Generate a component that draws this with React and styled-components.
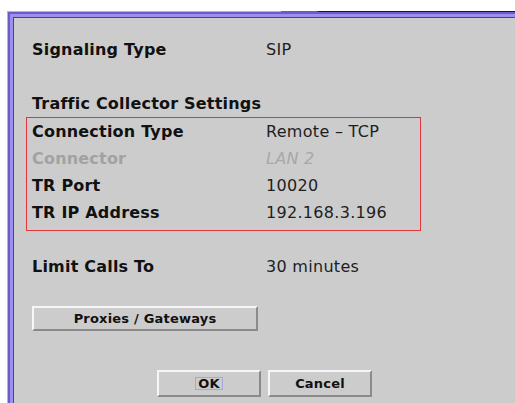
import React from "react";
import styled, { createGlobalStyle } from "styled-components";

const GlobalStyle = createGlobalStyle`
  html, body {
    margin: 0;
    height: 100%;
    overflow: hidden;
    background: #ffffff;
  }
  #root {
    height: 100%;
  }
`;

const Window = styled.div`
  margin: 11px 0 0 7px;
  height: calc(100% - 11px);
  display: flex;
  border-left: 1px solid #b4b4b4;
  border-top: 1px solid transparent;
  border-image: linear-gradient(to right, #b8b8b8 0, #b8b8b8 273px, #6a6a6a 274px, #6a6a6a 308px, #1a1a1a 312px) 1;
  border-right: 0;
  border-bottom: 0;
`;

const OuterBevel = styled.div`
  flex: 1;
  display: flex;
  border-top: 2px solid #6b5dc6;
  border-left: 2px solid #6b5dc6;
`;

const InnerBevel = styled.div`
  flex: 1;
  display: flex;
  border-top: 3px solid #9c8ff0;
  border-left: 3px solid #9c8ff0;
`;

const Panel = styled.div`
  flex: 1;
  display: flex;
  flex-direction: column;
  align-items: flex-start;
  background: #cccccc;
  border-top: 1px solid #4c4a62;
  border-left: 1px solid #4c4a62;
  padding: 18px 0 0 18px;
  font-family: "DejaVu Sans", "Liberation Sans", sans-serif;
`;

const Row = styled.div`
  display: grid;
  grid-template-columns: 234px 1fr;
  height: 27px;
  line-height: 27px;
  font-size: 16px;
  white-space: nowrap;
`;

const Label = styled.span`
  font-weight: bold;
  letter-spacing: 0.2px;
  color: ${(p) => (p.$disabled ? "#a2a2a2" : "#111111")};
`;

const Value = styled.span`
  color: ${(p) => (p.$disabled ? "#a8a8a8" : "#1e1e1e")};
  font-style: ${(p) => (p.$disabled ? "italic" : "normal")};
  letter-spacing: 0.3px;
`;

const Heading = styled.div`
  margin-top: 27px;
  height: 27px;
  line-height: 27px;
  font-size: 16px;
  font-weight: bold;
  letter-spacing: 0.2px;
  color: #111111;
`;

const Highlight = styled.div`
  margin-left: -6px;
  width: 395px;
  box-sizing: border-box;
  border: 1px solid #e2363a;
  padding: 0 0 4px 5px;
`;

const Spaced = styled.div`
  margin-top: ${(p) => p.$top}px;
`;

const Button = styled.button`
  box-sizing: border-box;
  width: ${(p) => p.$width}px;
  height: ${(p) => p.$height}px;
  margin: 0;
  padding: 0;
  background: #cccccc;
  border-style: solid;
  border-width: 2px;
  border-color: #f6f6f6 #8a8a8a #8a8a8a #f6f6f6;
  font-family: "DejaVu Sans", "Liberation Sans", sans-serif;
  font-size: 13px;
  font-weight: bold;
  color: #111111;
  letter-spacing: 0.2px;
  display: flex;
  align-items: center;
  justify-content: center;
`;

const FocusRing = styled.span`
  border: 1px solid #a9a6de;
  padding: 0 2px;
  line-height: 11px;
  height: 11px;
`;

const ButtonBar = styled.div`
  align-self: stretch;
  margin: 39px 0 0 -18px;
  display: flex;
  justify-content: center;
  gap: 7px;
`;

const settings = [
  { label: "Connection Type", value: "Remote – TCP" },
  { label: "Connector", value: "LAN 2", disabled: true },
  { label: "TR Port", value: "10020" },
  { label: "TR IP Address", value: "192.168.3.196" },
];

export default function App() {
  return (
    <>
      <GlobalStyle />
      <Window>
        <OuterBevel>
          <InnerBevel>
            <Panel>
              <Row>
                <Label>Signaling Type</Label>
                <Value>SIP</Value>
              </Row>
              <Heading>Traffic Collector Settings</Heading>
              <Highlight>
                {settings.map((s) => (
                  <Row key={s.label}>
                    <Label $disabled={s.disabled}>{s.label}</Label>
                    <Value $disabled={s.disabled}>{s.value}</Value>
                  </Row>
                ))}
              </Highlight>
              <Spaced $top={22}>
                <Row>
                  <Label>Limit Calls To</Label>
                  <Value>30 minutes</Value>
                </Row>
              </Spaced>
              <Spaced $top={26}>
                <Button $width={226} $height={25}>Proxies / Gateways</Button>
              </Spaced>
              <ButtonBar>
                <Button $width={104} $height={27}>
                  <FocusRing>OK</FocusRing>
                </Button>
                <Button $width={104} $height={27}>Cancel</Button>
              </ButtonBar>
            </Panel>
          </InnerBevel>
        </OuterBevel>
      </Window>
    </>
  );
}
